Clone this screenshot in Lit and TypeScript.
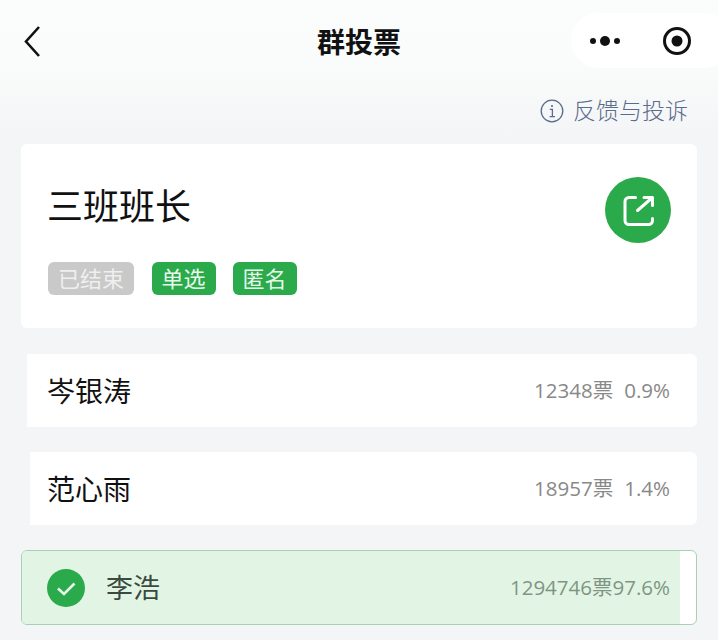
import { LitElement, css, html, svg } from 'lit'
import { customElement } from 'lit/decorators.js'

interface Option {
  name: string
  votes: number
  percent: string
  fill: number
  chosen?: boolean
}

const OPTIONS: Option[] = [
  { name: '岑银涛', votes: 12348, percent: '0.9%', fill: 0.9 },
  { name: '范心雨', votes: 18957, percent: '1.4%', fill: 1.4 },
  { name: '李浩', votes: 1294746, percent: '97.6%', fill: 97.6, chosen: true },
]

const backIcon = svg`<path d="M15 2 2 16.5 15 31" fill="none" stroke="#111" stroke-width="2.6" />`
const shareIcon = svg`
  <path d="M13.5 3.5H7a4 4 0 0 0-4 4v19a4 4 0 0 0 4 4h19.500a4 4 0 0 0 4-4v-2" fill="none" stroke="#fff" stroke-width="3" stroke-linecap="round" />
  <path d="M15.500 16.500 30.500 3.500M22 3.500h8.500V11.500" fill="none" stroke="#fff" stroke-width="3" stroke-linecap="round" stroke-linejoin="round" />`

@customElement('app-root')
export class AppRoot extends LitElement {
  private renderOption(o: Option) {
    return html`
      <div class="option ${o.chosen ? 'chosen' : ''}">
        <div class="fill" style="width: ${o.fill}%"></div>
        ${o.chosen
          ? html`<svg class="check" viewBox="0 0 38 38" width="38" height="38">
              <circle cx="19" cy="19" r="19" fill="#2aaa4a" />
              <path d="M11 19.5 17 25 27.5 14.5" fill="none" stroke="#e6f7ea" stroke-width="2.6" />
            </svg>`
          : ''}
        <span class="name">${o.name}</span>
        <span class="stats"
          ><span>${o.votes}票</span><span class="percent">${o.percent}</span></span
        >
      </div>
    `
  }

  render() {
    return html`
      <header class="nav">
        <svg class="back" viewBox="0 0 17 33" width="17" height="33">${backIcon}</svg>
        <h1 class="title">群投票</h1>
        <div class="capsule">
          <svg viewBox="0 0 32 12" width="32" height="12">
            <circle cx="4" cy="6" r="3" fill="#111" />
            <circle cx="16" cy="6" r="5" fill="#111" />
            <circle cx="28" cy="6" r="3" fill="#111" />
          </svg>
          <svg viewBox="0 0 30 30" width="30" height="30">
            <circle cx="15" cy="15" r="12.5" fill="none" stroke="#111" stroke-width="3" />
            <circle cx="15" cy="15" r="5.5" fill="#111" />
          </svg>
        </div>
      </header>
      <main class="page">
        <div class="report">
          <svg viewBox="0 0 24 24" width="24" height="24">
            <circle cx="12" cy="12" r="10.8" fill="none" stroke="#5b6b8c" stroke-width="1.3" />
            <circle cx="12" cy="7" r="1.1" fill="#5b6b8c" />
            <path d="M9.8 10.4H12.4V17.4M9.6 17.6H15" fill="none" stroke="#5b6b8c" stroke-width="1.3" />
          </svg>
          <span>反馈与投诉</span>
        </div>
        <section class="card">
          <div class="card-main">
            <div class="poll-title">三班班长</div>
            <div class="tags">
              <span class="tag ended">已结束</span>
              <span class="tag">单选</span>
              <span class="tag">匿名</span>
            </div>
          </div>
          <div class="share">
            <svg viewBox="0 0 33 33" width="33" height="33">${shareIcon}</svg>
          </div>
        </section>
        <div class="options">${OPTIONS.map((o) => this.renderOption(o))}</div>
      </main>
    `
  }

  static styles = css`
    :host {
      display: block;
      width: 718px;
      height: 640px;
      overflow: hidden;
      background: linear-gradient(#fbfcfc 0, #fafbfb 60px, #f4f5f6 135px, #f4f5f6 100%);
      font-family: 'Noto Sans CJK SC', 'Liberation Sans', sans-serif;
      color: #111;
    }
    .nav {
      box-sizing: border-box;
      height: 84px;
      padding-top: 13px;
      display: flex;
      align-items: flex-start;
      position: relative;
    }
    .back {
      margin: 12px 0 0 24px;
    }
    .title {
      position: absolute;
      left: 0;
      right: 0;
      top: 21px;
      margin: 0;
      text-align: center;
      font-size: 28px;
      line-height: 40px;
      font-weight: 700;
    }
    .capsule {
      margin-left: auto;
      box-sizing: border-box;
      width: 160px;
      height: 55px;
      margin-right: -13px;
      padding: 0 39px 0 18px;
      border-radius: 28px;
      background: #fff;
      display: flex;
      align-items: center;
      justify-content: space-between;
    }
    .page {
      padding: 0 21px;
    }
    .report {
      height: 60px;
      box-sizing: border-box;
      padding: 10px 9px 0 0;
      display: flex;
      justify-content: flex-end;
      align-items: flex-start;
      gap: 9px;
      color: #5b6b8c;
      font-size: 23px;
      font-weight: 300;
      line-height: 30px;
    }
    .report svg {
      margin-top: 5px;
    }
    .card {
      box-sizing: border-box;
      height: 184px;
      padding: 0 26px 0 27px;
      background: #fff;
      border-radius: 6px;
      display: flex;
      align-items: flex-start;
      justify-content: space-between;
    }
    .poll-title {
      margin: 34px 0 0 -1px;
      font-size: 36px;
      line-height: 52px;
    }
    .tags {
      margin-top: 32px;
      display: flex;
      gap: 17px;
    }
    .tag {
      box-sizing: border-box;
      height: 33px;
      padding: 0 10px 2px;
      border-radius: 6px;
      background: #2aaa4a;
      color: #e9f8ec;
      font-size: 22px;
      line-height: 31px;
    }
    .tag.ended {
      background: #c9c9c9;
      color: #efefef;
      margin-right: 0.5px;
    }
    .share {
      margin-top: 33px;
      width: 66px;
      height: 66px;
      border-radius: 50%;
      background: #2aaa4a;
      display: flex;
      align-items: center;
      justify-content: center;
    }
    .options {
      margin-top: 26px;
      display: flex;
      flex-direction: column;
      gap: 25px;
    }
    .option {
      position: relative;
      box-sizing: border-box;
      height: 73px;
      padding: 0 27px 0 26px;
      background: #fff;
      border-radius: 6px;
      overflow: hidden;
      display: flex;
      align-items: center;
    }
    .fill {
      position: absolute;
      left: 0;
      top: 0;
      bottom: 0;
      background: #f4f5f6;
    }
    .option.chosen {
      height: 75px;
      border: 1px solid #a9d0b4;
      padding: 0 26px 0 25px;
    }
    .option.chosen .fill {
      background: #e2f5e5;
    }
    .check,
    .name,
    .stats {
      position: relative;
    }
    .check {
      margin-right: 21px;
    }
    .name {
      font-size: 28px;
      line-height: 40px;
      margin-top: -2px;
    }
    .chosen .name {
      font-size: 27px;
      color: #3a4a3e;
    }
    .stats {
      margin-left: auto;
      margin-top: -2px;
      display: flex;
      gap: 11px;
      color: #888;
      font-family: 'Open Sans', 'Noto Sans CJK SC', sans-serif;
      font-size: 20.5px;
      line-height: 30px;
    }
    .chosen .stats {
      gap: 0;
      color: #7f9584;
    }
  `
}

declare global {
  interface HTMLElementTagNameMap {
    'app-root': AppRoot
  }
}
